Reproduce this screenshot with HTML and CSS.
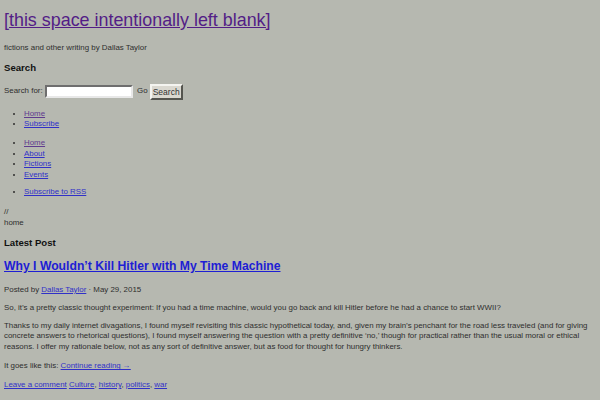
FILE: index.html
```html
<!DOCTYPE html>
<html>
<head>
<meta charset="utf-8">
<link rel="stylesheet" href="styles.css">
</head>
<body>
<div class="page">
  <h1 class="site-title"><a href="#" class="visited">[this space intentionally left blank]</a></h1>
  <p class="tagline">fictions and other writing by Dallas Taylor</p>
  <h2 class="widget-title">Search</h2>
  <form class="search">
    <label>Search for:</label>
    <span class="input"></span>
    <span class="go">Go</span>
    <span class="button">Search</span>
  </form>
  <ul class="menu first">
    <li><a href="#" class="visited">Home</a></li>
    <li><a href="#">Subscribe</a></li>
  </ul>
  <ul class="menu second">
    <li><a href="#" class="visited">Home</a></li>
    <li><a href="#">About</a></li>
    <li><a href="#">Fictions</a></li>
    <li><a href="#">Events</a></li>
  </ul>
  <ul class="menu">
    <li><a href="#">Subscribe to RSS</a></li>
  </ul>
  <div class="crumbs"><div class="slashes">//</div><div>home</div></div>
  <h2 class="widget-title latest">Latest Post</h2>
  <h2 class="post-title"><a href="#">Why I Wouldn’t Kill Hitler with My Time Machine</a></h2>
  <p class="meta">Posted by <a href="#">Dallas Taylor</a> · May 29, 2015</p>
  <p>So, it’s a pretty classic thought experiment: If you had a time machine, would you go back and kill Hitler before he had a chance to start WWII?</p>
  <p>Thanks to my daily internet divagations, I found myself revisiting this classic hypothetical today, and, given my brain’s penchant for the road less traveled (and for giving concrete answers to rhetorical questions), I found myself answering the question with a pretty definitive ‘no,’ though for practical rather than the usual moral or ethical reasons. I offer my rationale below, not as any sort of definitive answer, but as food for thought for hungry thinkers.</p>
  <p class="more">It goes like this: <a href="#">Continue reading →</a></p>
  <p class="tags"><a href="#">Leave a comment</a> <a href="#">Culture</a>, <a href="#">history</a>, <a href="#">politics</a>, <a href="#">war</a></p>
</div>
</body>
</html>
```
FILE: styles.css
```css
html, body {
  margin: 0;
  padding: 0;
  background: #b6b8b0;
}
body {
  font-family: "Liberation Sans", Arial, sans-serif;
  font-size: 7.9px;
  line-height: 10.6px;
  color: #2e2e2e;
}
.page {
  padding: 4px 3px 0 4px;
}
a {
  color: #3030c8;
  text-decoration: underline;
}
a.visited {
  color: #5f3b8f;
}
.site-title {
  margin: 5px 0 0;
  font-size: 17.9px;
  line-height: 22px;
  font-weight: normal;
}
.site-title a {
  color: #531d86;
}
.tagline {
  margin: 11.7px 0 0;
}
.widget-title {
  margin: 9px 0 0;
  font-size: 9.6px;
  line-height: 12px;
  font-weight: bold;
  color: #111;
}
.search {
  margin: 9px 0 0;
  display: flex;
  align-items: center;
  height: 17px;
}
.search .input {
  display: inline-block;
  width: 84px;
  height: 9px;
  margin-left: 2px;
  background: #fff;
  border: 2px solid;
  border-color: #6e6e6e #e8e8e8 #e8e8e8 #6e6e6e;
}
.search .go {
  margin-left: 4.5px;
}
.search .button {
  display: inline-block;
  margin-left: 2px;
  width: 29px;
  height: 12px;
  line-height: 12px;
  text-align: center;
  font-size: 8.5px;
  background: #dad8d0;
  border: 2px solid;
  border-color: #f4f4f0 #55554f #55554f #f4f4f0;
  color: #333;
}
.menu {
  margin: 7px 0 0;
  padding: 0 0 0 20px;
  list-style: disc;
}
.menu.first {
  margin-top: 8.5px;
}
.menu.second {
  margin-top: 8px;
}
.crumbs {
  margin-top: 9px;
}
.latest {
  margin-top: 9px;
}
.post-title {
  margin: 10px 0 0;
  font-size: 12.2px;
  line-height: 15px;
  font-weight: bold;
}
.post-title a {
  color: #1e1ed4;
}
p {
  margin: 7.4px 0 0;
}
.meta {
  margin-top: 10.5px;
}
.more {
  margin-top: 9px;
}
.tags {
  margin-top: 8px;
}
```
